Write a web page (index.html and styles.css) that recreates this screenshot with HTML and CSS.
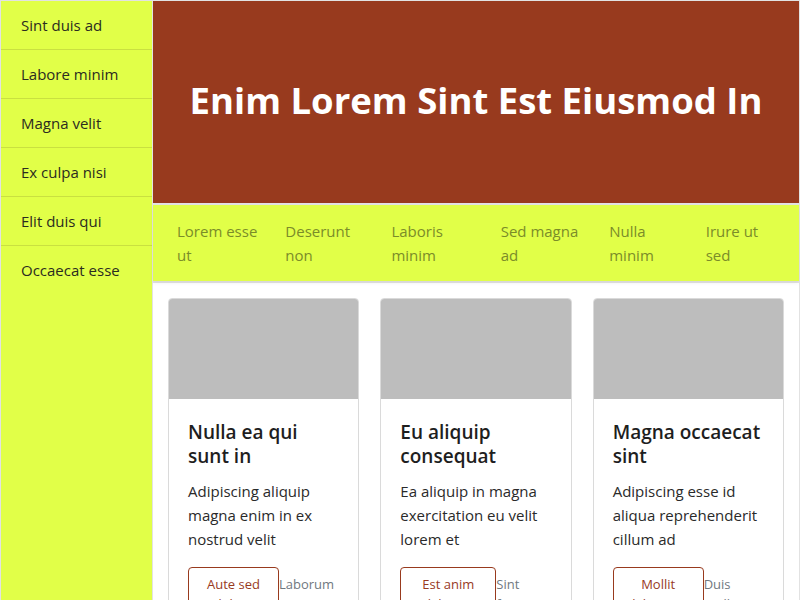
FILE: index.html
```html
<!DOCTYPE html>
<html lang="en">
<head>
<meta charset="utf-8">
<title>Layout</title>
<link rel="stylesheet" href="styles.css">
</head>
<body>
<div class="page">
  <aside class="sidebar">
    <a class="side-item" href="#">Sint duis ad</a>
    <a class="side-item" href="#">Labore minim</a>
    <a class="side-item" href="#">Magna velit</a>
    <a class="side-item" href="#">Ex culpa nisi</a>
    <a class="side-item" href="#">Elit duis qui</a>
    <a class="side-item" href="#">Occaecat esse</a>
  </aside>
  <div class="main-col">
    <header class="hero">
      <h1 class="hero-title">Enim Lorem Sint Est Eiusmod In</h1>
    </header>
    <nav class="topnav">
      <a class="nav-item" href="#">Lorem esse ut</a>
      <a class="nav-item" href="#">Deserunt non</a>
      <a class="nav-item" href="#">Laboris minim</a>
      <a class="nav-item" href="#">Sed magna ad</a>
      <a class="nav-item" href="#">Nulla minim</a>
      <a class="nav-item" href="#">Irure ut sed</a>
    </nav>
    <main class="content">
      <article class="card">
        <div class="card-img"></div>
        <div class="card-body">
          <h3 class="card-title">Nulla ea qui sunt in</h3>
          <p class="card-text">Adipiscing aliquip magna enim in ex nostrud velit</p>
          <div class="card-foot">
            <button class="btn">Aute sed dolore</button>
            <span class="meta">Laborum sit</span>
          </div>
        </div>
      </article>
      <article class="card">
        <div class="card-img"></div>
        <div class="card-body">
          <h3 class="card-title">Eu aliquip consequat</h3>
          <p class="card-text">Ea aliquip in magna exercitation eu velit lorem et</p>
          <div class="card-foot">
            <button class="btn btn-wide">Est anim laboris</button>
            <span class="meta">Sint fugiat</span>
          </div>
        </div>
      </article>
      <article class="card">
        <div class="card-img"></div>
        <div class="card-body">
          <h3 class="card-title">Magna occaecat sint</h3>
          <p class="card-text">Adipiscing esse id aliqua reprehenderit cillum ad</p>
          <div class="card-foot">
            <button class="btn">Mollit laborum</button>
            <span class="meta">Duis mollit</span>
          </div>
        </div>
      </article>
    </main>
  </div>
</div>
</body>
</html>
```
FILE: styles.css
```css
* { box-sizing: border-box; }
html, body { margin: 0; padding: 0; }
body {
  background: #e2e2e2;
  font-family: "Open Sans", "Noto Sans", sans-serif;
  font-size: 16px;
  line-height: 24px;
  color: #222;
  height: 600px;
  overflow: hidden;
}
.page {
  display: grid;
  grid-template-columns: 151px 1fr;
  column-gap: 1px;
  padding: 1px 1px 0 1px;
  min-height: 600px;
}
.sidebar {
  background: #e1ff48;
  display: flex;
  flex-direction: column;
  min-height: 599px;
}
.side-item {
  display: block;
  padding: 12px 20px;
  color: #2b2b20;
  text-decoration: none;
  font-size: 15px;
}
.side-item + .side-item {
  border-top: 1px solid #c9e040;
}
.main-col {
  display: flex;
  flex-direction: column;
  gap: 2px;
}
.hero {
  background: #983a1e;
  height: 202px;
  display: flex;
  align-items: center;
  justify-content: center;
  padding-bottom: 4px;
}
.hero-title {
  margin: 0;
  color: #fff;
  font-size: 36.5px;
  font-weight: 700;
  line-height: 44px;
}
.topnav {
  background: #e1ff48;
  display: flex;
  gap: 24px;
  padding: 14px 24px;
  box-shadow: 0 2px 4px rgba(0,0,0,0.06);
  position: relative;
  z-index: 1;
}
.nav-item {
  color: #7b8c29;
  text-decoration: none;
  font-size: 15px;
}
.content {
  background: #fff;
  display: grid;
  grid-template-columns: repeat(3, 1fr);
  gap: 21px;
  padding: 15px 15px 20px;
  flex: 1;
}
.card {
  border: 1px solid #dadada;
  border-radius: 4px;
  overflow: hidden;
  background: #fff;
}
.card-img {
  height: 100px;
  background: #bdbdbd;
}
.card-body {
  padding: 21px 20px 20px 19px;
}
.card-title {
  margin: 0 0 11px;
  font-size: 19px;
  font-weight: 600;
  line-height: 24px;
  color: #1e1e1e;
}
.card-text {
  margin: 0 0 16px;
  font-size: 15px;
  line-height: 24px;
  color: #2a2a2a;
}
.card-foot {
  display: flex;
  align-items: flex-start;
}
.btn {
  flex: 0 0 91px;
  background: #fff;
  border: 1px solid #983a1e;
  border-radius: 4px;
  color: #983a1e;
  font-family: inherit;
  font-size: 13px;
  line-height: 20px;
  padding: 6px 14px 5px;
  text-align: center;
}
.btn-wide {
  flex-basis: 96px;
}
.meta {
  font-size: 13px;
  line-height: 20px;
  color: #707880;
  padding-top: 7px;
}
```
